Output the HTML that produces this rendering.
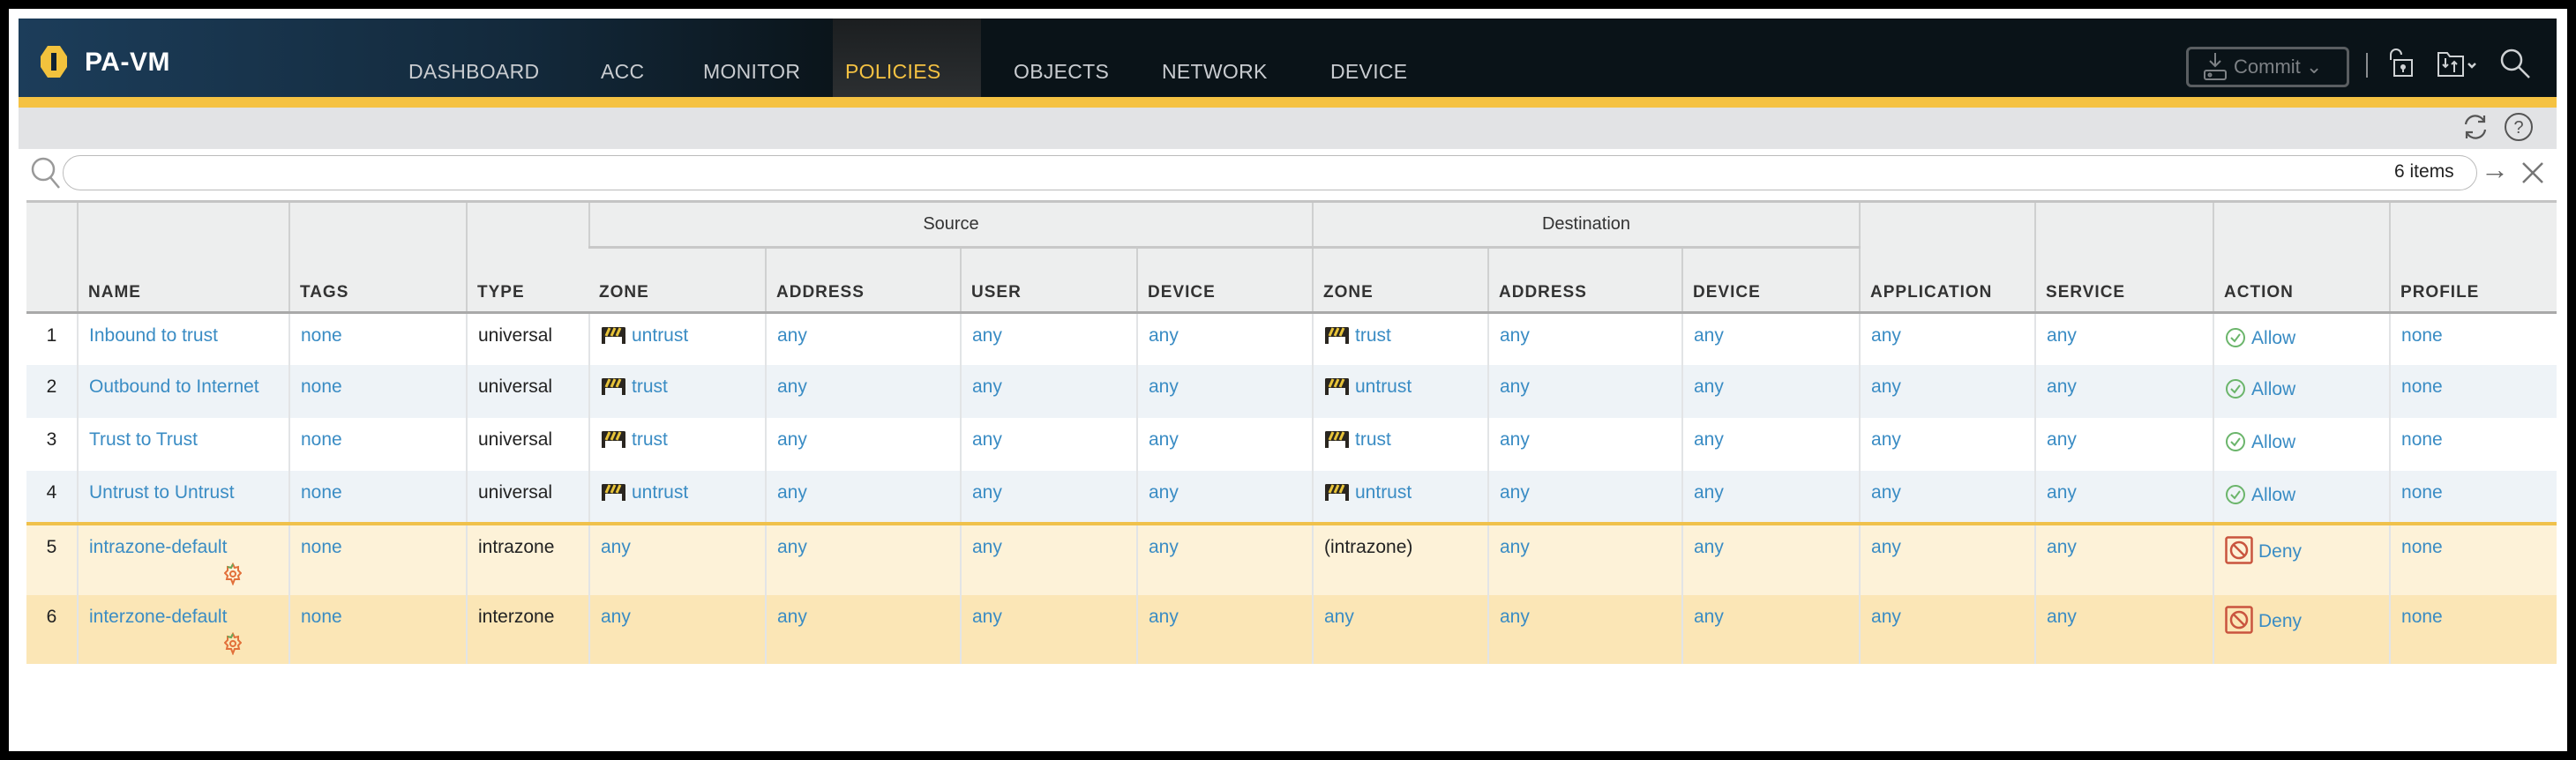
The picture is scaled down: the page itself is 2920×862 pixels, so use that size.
<!DOCTYPE html>
<html><head><meta charset="utf-8">
<style>
*{box-sizing:border-box;margin:0;padding:0}
html,body{width:2920px;height:862px;background:#000;overflow:hidden;font-family:"Liberation Sans",sans-serif}
#panel{position:absolute;left:10px;top:10px;width:2900px;height:842px;background:#fff}
#nav{position:absolute;left:21px;top:21px;width:2877px;height:89px;background:linear-gradient(90deg,#1c3d5a 0%,#13293b 20%,#0a1318 33%,#0a1318 100%)}
#stripe{position:absolute;left:21px;top:110px;width:2877px;height:12px;background:#f5c242}
#tool{position:absolute;left:21px;top:122px;width:2877px;height:47px;background:#e2e3e5}
.nv{position:absolute;top:68px;font-size:23px;color:#c9ccd0;letter-spacing:0.3px}
#pol{position:absolute;left:944px;top:21px;width:168px;height:89px;background:linear-gradient(#1b1e20,#2c2f31)}
#search{position:absolute;left:71px;top:176px;width:2737px;height:40px;border:1.5px solid #bbb;border-radius:20px;background:#fff}
table{position:absolute;left:30px;top:227px;border-collapse:collapse;table-layout:fixed;width:2868px}
th{background:#edeeee;font-size:19px;font-weight:bold;color:#333;letter-spacing:1px;text-align:left;padding:0 0 0 11px;border-left:2px solid #cfd0d0;vertical-align:bottom;padding-bottom:10px}
th.g{text-align:center;vertical-align:middle;font-weight:normal;letter-spacing:0;font-size:20px;padding:0;border-bottom:3px solid #c8c8c8}
thead tr:first-child th{border-top:3px solid #c4c4c4}
thead tr:last-child th, th.r{border-bottom:3px solid #a9a9a9}
td{font-size:21px;color:#3a8cc4;padding:12px 0 0 12px;vertical-align:top;border-left:2px solid #e2e4e6;line-height:26px;white-space:nowrap}
td.n{color:#222;text-align:center;padding-left:0;border-left:none}
td.k{color:#222}
th:first-child{border-left:none}
tr.a td{background:#fff}
tr.b td{background:#eef3f7}
tr.c td{background:#fdf2d8}
tr.d td{background:#fbe6b6}
tr.c td{border-top:4px solid #f0c14b}
.z{display:inline-block;width:29px;height:20px;vertical-align:-3px;margin-right:6px}
.ic{display:inline-block;vertical-align:-5px;margin-right:6px}
</style></head><body>
<div id="panel"></div>
<div id="nav"></div>
<div id="pol"></div>
<div id="stripe"></div>
<div id="tool"></div>
<svg style="position:absolute;left:44px;top:50px" width="34" height="40" viewBox="0 0 34 40"><path d="M10 2 L24 2 L32 14 L32 26 L24 38 L10 38 L2 26 L2 14 Z" fill="#f2c23d"/><path d="M14 10 L20 10 L20 30 L14 30 Z" fill="#0f2233"/></svg>
<div style="position:absolute;left:96px;top:54px;font-size:30px;font-weight:bold;color:#fff;letter-spacing:0.5px">PA-VM</div>
<div class="nv" style="left:463px">DASHBOARD</div>
<div class="nv" style="left:681px">ACC</div>
<div class="nv" style="left:797px">MONITOR</div>
<div class="nv" style="left:958px;color:#f5c242">POLICIES</div>
<div class="nv" style="left:1149px">OBJECTS</div>
<div class="nv" style="left:1317px">NETWORK</div>
<div class="nv" style="left:1508px">DEVICE</div>
<div style="position:absolute;left:2478px;top:53px;width:185px;height:46px;border:3px solid #5a5e61;border-radius:6px"></div>
<svg style="position:absolute;left:2496px;top:58px" width="30" height="36" viewBox="0 0 30 36" fill="none" stroke="#7d8185" stroke-width="2"><path d="M15 2 V16 M9 11 L15 17 L21 11"/><rect x="3" y="22" width="24" height="10" rx="2"/><circle cx="9" cy="27" r="1.5"/></svg>
<div style="position:absolute;left:2532px;top:63px;font-size:22px;color:#7d8185">Commit ⌄</div>
<div style="position:absolute;left:2682px;top:60px;width:2px;height:28px;background:#8a8d90"></div>
<svg style="position:absolute;left:2704px;top:54px" width="34" height="36" viewBox="0 0 34 36" fill="none" stroke="#cfd2d4" stroke-width="2"><path d="M6 14 V8 A6 6 0 0 1 18 8"/><rect x="10" y="14" width="20" height="18"/><circle cx="20" cy="22" r="2" fill="#cfd2d4"/><path d="M20 24 V28"/></svg>
<svg style="position:absolute;left:2762px;top:56px" width="50" height="34" viewBox="0 0 50 34" fill="none" stroke="#cfd2d4" stroke-width="2"><path d="M2 4 H12 L15 8 H30 V30 H2 Z"/><path d="M10 10 V20 M7 17 L10 20 L13 17 M20 26 V14 M17 17 L20 14 L23 17"/><path d="M36 16 L40 20 L44 16" stroke-width="2.5"/></svg>
<svg style="position:absolute;left:2832px;top:53px" width="38" height="38" viewBox="0 0 38 38" fill="none" stroke="#cfd2d4" stroke-width="2.5"><circle cx="15" cy="15" r="11"/><path d="M23 23 L35 35"/></svg>
<svg style="position:absolute;left:2790px;top:128px" width="32" height="32" viewBox="0 0 32 32" fill="none" stroke="#555" stroke-width="2.2"><path d="M5 13 A11 11 0 0 1 26 10 M27 19 A11 11 0 0 1 6 22"/><path d="M26 3 V10 H19 M6 29 V22 H13"/></svg>
<svg style="position:absolute;left:2838px;top:127px" width="34" height="34" viewBox="0 0 34 34"><circle cx="17" cy="17" r="15" fill="none" stroke="#555" stroke-width="2"/><text x="17" y="24" font-family="Liberation Sans" font-size="20" fill="#555" text-anchor="middle">?</text></svg>
<svg style="position:absolute;left:32px;top:176px" width="40" height="40" viewBox="0 0 40 40" fill="none" stroke="#999" stroke-width="2.5"><circle cx="17" cy="16" r="12"/><path d="M25 25 L35 37"/></svg>
<div id="search"></div>
<div style="position:absolute;left:2714px;top:183px;font-size:21px;color:#222">6 items</div>
<div style="position:absolute;left:2812px;top:174px;font-size:32px;color:#666">→</div>
<svg style="position:absolute;left:2857px;top:182px" width="28" height="28" viewBox="0 0 28 28" stroke="#777" stroke-width="2.5"><path d="M3 3 L25 25 M25 3 L3 25"/></svg>

<svg width="0" height="0" style="position:absolute"><defs>
<symbol id="zn" viewBox="0 0 29 20"><rect x="1" y="1" width="27" height="11" rx="1.5" fill="#2a2620"/><path d="M6 11 L10 2 M12 11 L16 2 M18 11 L22 2" stroke="#e8c43a" stroke-width="3"/><rect x="1" y="11" width="4" height="9" fill="#2a2620"/><rect x="24" y="11" width="4" height="9" fill="#2a2620"/></symbol>
<symbol id="ok" viewBox="0 0 24 24"><circle cx="12" cy="12" r="10" fill="none" stroke="#6bb56b" stroke-width="2"/><path d="M7 12 L11 16 L17 8" fill="none" stroke="#6bb56b" stroke-width="2"/></symbol>
<symbol id="no" viewBox="0 0 32 32"><rect x="1.5" y="1.5" width="29" height="29" rx="2" fill="none" stroke="#c9543e" stroke-width="2.5"/><circle cx="16" cy="16" r="9" fill="none" stroke="#c9543e" stroke-width="2.5"/><path d="M10 10 L22 22" stroke="#c9543e" stroke-width="2.5"/></symbol>
<symbol id="gr" viewBox="0 0 20 26"><path d="M10 2 L12 6 L16 5 L16 9 L19 12 L16 15 L17 19 L12 19 L10 24 L8 19 L3 19 L4 15 L1 12 L4 9 L4 5 L8 6 Z" fill="none" stroke="#e2703a" stroke-width="2"/><path d="M4 5 L8 6 L10 2" stroke="#67a85a" stroke-width="2" fill="none"/><circle cx="10" cy="13" r="3" fill="none" stroke="#e2703a" stroke-width="2"/></symbol>
</defs></svg>

<table>
<colgroup><col style="width:58px"><col style="width:240px"><col style="width:201px"><col style="width:139px"><col style="width:200px"><col style="width:221px"><col style="width:200px"><col style="width:199px"><col style="width:199px"><col style="width:220px"><col style="width:201px"><col style="width:199px"><col style="width:202px"><col style="width:200px"><col style="width:189px"></colgroup>
<thead>
<tr style="height:52px"><th rowspan="2" class="r"></th><th rowspan="2" class="r">NAME</th><th rowspan="2" class="r">TAGS</th><th rowspan="2" class="r">TYPE</th><th colspan="4" class="g">Source</th><th colspan="3" class="g">Destination</th><th rowspan="2" class="r">APPLICATION</th><th rowspan="2" class="r">SERVICE</th><th rowspan="2" class="r">ACTION</th><th rowspan="2" class="r">PROFILE</th></tr>
<tr style="height:74px"><th>ZONE</th><th>ADDRESS</th><th>USER</th><th>DEVICE</th><th>ZONE</th><th>ADDRESS</th><th>DEVICE</th></tr>
</thead>
<tbody>
<tr class="a" style="height:59px"><td class="n">1</td><td>Inbound to trust</td><td>none</td><td class="k">universal</td><td><svg class="z"><use href="#zn"/></svg>untrust</td><td>any</td><td>any</td><td>any</td><td><svg class="z"><use href="#zn"/></svg>trust</td><td>any</td><td>any</td><td>any</td><td>any</td><td style="padding-top:15px"><svg class="ic" width="24" height="24"><use href="#ok"/></svg>Allow</td><td>none</td></tr>
<tr class="b" style="height:60px"><td class="n">2</td><td>Outbound to Internet</td><td>none</td><td class="k">universal</td><td><svg class="z"><use href="#zn"/></svg>trust</td><td>any</td><td>any</td><td>any</td><td><svg class="z"><use href="#zn"/></svg>untrust</td><td>any</td><td>any</td><td>any</td><td>any</td><td style="padding-top:15px"><svg class="ic" width="24" height="24"><use href="#ok"/></svg>Allow</td><td>none</td></tr>
<tr class="a" style="height:60px"><td class="n">3</td><td>Trust to Trust</td><td>none</td><td class="k">universal</td><td><svg class="z"><use href="#zn"/></svg>trust</td><td>any</td><td>any</td><td>any</td><td><svg class="z"><use href="#zn"/></svg>trust</td><td>any</td><td>any</td><td>any</td><td>any</td><td style="padding-top:15px"><svg class="ic" width="24" height="24"><use href="#ok"/></svg>Allow</td><td>none</td></tr>
<tr class="b" style="height:60px"><td class="n">4</td><td>Untrust to Untrust</td><td>none</td><td class="k">universal</td><td><svg class="z"><use href="#zn"/></svg>untrust</td><td>any</td><td>any</td><td>any</td><td><svg class="z"><use href="#zn"/></svg>untrust</td><td>any</td><td>any</td><td>any</td><td>any</td><td style="padding-top:15px"><svg class="ic" width="24" height="24"><use href="#ok"/></svg>Allow</td><td>none</td></tr>
<tr class="c" style="height:81px"><td class="n">5</td><td style="position:relative">intrazone-default<svg style="position:absolute;left:165px;top:42px" width="20" height="26"><use href="#gr"/></svg></td><td>none</td><td class="k">intrazone</td><td>any</td><td>any</td><td>any</td><td>any</td><td class="k">(intrazone)</td><td>any</td><td>any</td><td>any</td><td>any</td><td style="padding-top:12px"><svg class="ic" width="32" height="32" style="vertical-align:-8px"><use href="#no"/></svg>Deny</td><td>none</td></tr>
<tr class="d" style="height:78px"><td class="n">6</td><td style="position:relative">interzone-default<svg style="position:absolute;left:165px;top:42px" width="20" height="26"><use href="#gr"/></svg></td><td>none</td><td class="k">interzone</td><td>any</td><td>any</td><td>any</td><td>any</td><td>any</td><td>any</td><td>any</td><td>any</td><td>any</td><td style="padding-top:12px"><svg class="ic" width="32" height="32" style="vertical-align:-8px"><use href="#no"/></svg>Deny</td><td>none</td></tr>
</tbody>
</table>
</body></html>
